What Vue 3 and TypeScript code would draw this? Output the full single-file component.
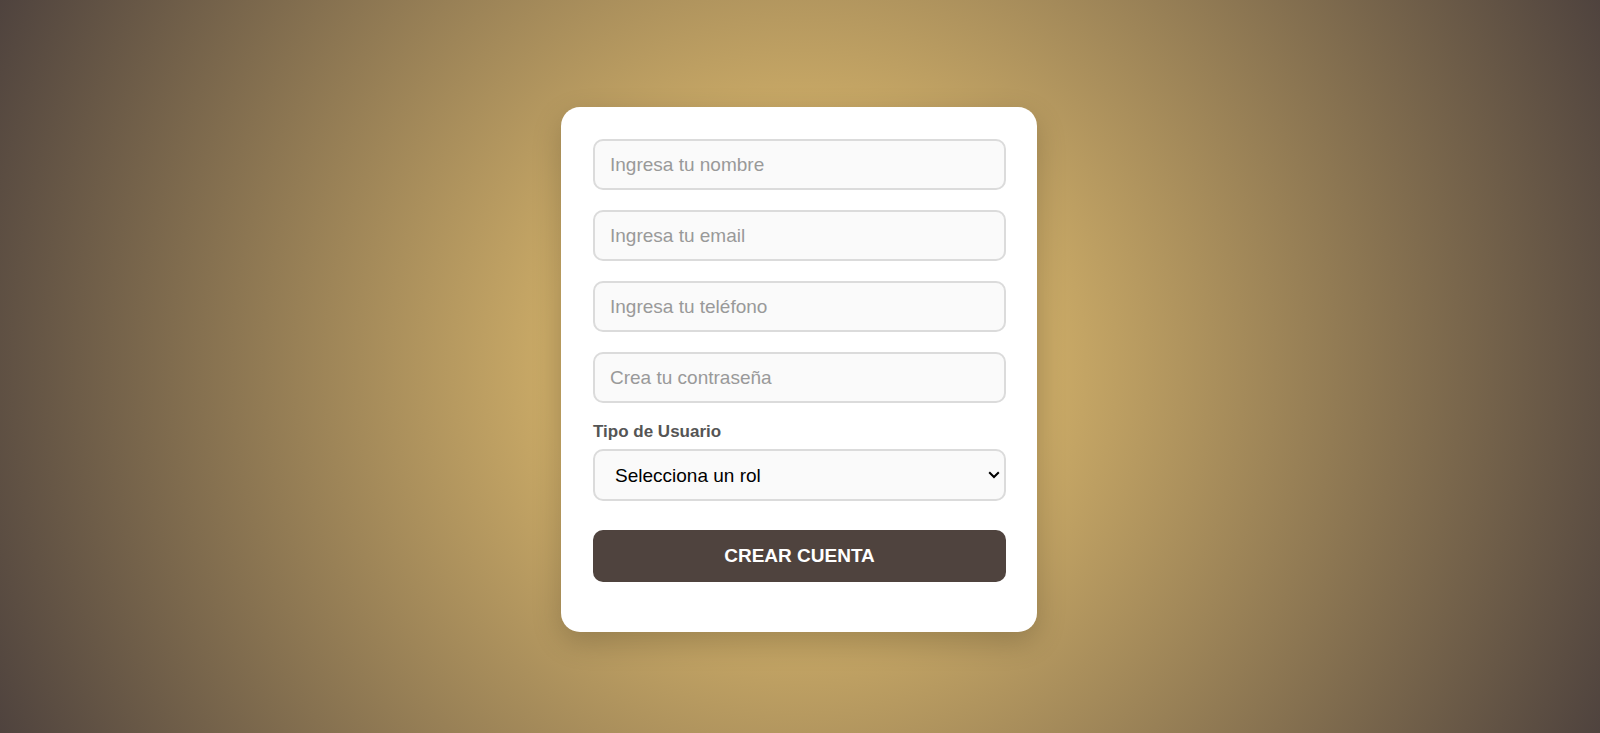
<script setup lang="ts">
import { reactive } from 'vue'

interface Field {
  id: 'nombre' | 'email' | 'telefono' | 'password'
  type: string
  placeholder: string
}

const fields: Field[] = [
  { id: 'nombre', type: 'text', placeholder: 'Ingresa tu nombre' },
  { id: 'email', type: 'email', placeholder: 'Ingresa tu email' },
  { id: 'telefono', type: 'tel', placeholder: 'Ingresa tu teléfono' },
  { id: 'password', type: 'password', placeholder: 'Crea tu contraseña' },
]

const form = reactive({ nombre: '', email: '', telefono: '', password: '', rol: '' })
</script>

<template>
  <main class="page">
    <form class="card" @submit.prevent>
      <input
        v-for="field in fields"
        :id="field.id"
        :key="field.id"
        v-model="form[field.id]"
        class="control"
        :type="field.type"
        :placeholder="field.placeholder"
        :aria-label="field.placeholder"
      />
      <div class="group">
        <label class="label" for="rol">Tipo de Usuario</label>
        <div class="select-wrap">
          <select id="rol" v-model="form.rol" class="control select">
            <option value="">Selecciona un rol</option>
          </select>
          <svg class="chevron" viewBox="0 0 12 8" width="12" height="8" aria-hidden="true">
            <path d="M1.2 1.2 L6 6 L10.8 1.2" fill="none" stroke="#000" stroke-width="2" />
          </svg>
        </div>
      </div>
      <button class="submit" type="submit">CREAR CUENTA</button>
    </form>
  </main>
</template>

<style>
body {
  margin: 0;
}
</style>

<style scoped>
.page {
  box-sizing: border-box;
  min-height: 100vh;
  display: flex;
  align-items: center;
  justify-content: center;
  padding: 26px 22px 20px 20px;
  background: radial-gradient(circle, #c9a966 29%, #4f433e 100%);
  font-family: "Liberation Sans", Arial, sans-serif;
}

.card {
  box-sizing: border-box;
  width: 100%;
  max-width: 476px;
  display: flex;
  flex-direction: column;
  gap: 20px;
  padding: 32px 31px 50px 32px;
  border-radius: 19px;
  background: #fff;
  box-shadow: 0 10px 30px rgba(0, 0, 0, 0.2);
}

.control {
  box-sizing: border-box;
  width: 100%;
  height: 51px;
  margin: 0;
  padding: 0 15px;
  border: 2px solid #dbdbdb;
  border-radius: 10px;
  background: #fafafa;
  color: #000;
  font: 19px "Liberation Sans", Arial, sans-serif;
}

.control::placeholder {
  color: #999;
  opacity: 1;
}

.group {
  display: flex;
  flex-direction: column;
  gap: 8px;
}

.label {
  color: #555;
  font-size: 17px;
  font-weight: bold;
  line-height: 18px;
}

.select-wrap {
  position: relative;
  display: flex;
}

.select {
  height: 52px;
  padding: 0 24px 0 20px;
  appearance: none;
}

.chevron {
  position: absolute;
  top: 22px;
  right: 6px;
  pointer-events: none;
}

.submit {
  height: 52px;
  margin-top: 9px;
  border: 0;
  border-radius: 10px;
  background: #4f433e;
  color: #fff;
  font: bold 19px "Liberation Sans", Arial, sans-serif;
  cursor: pointer;
}
</style>
